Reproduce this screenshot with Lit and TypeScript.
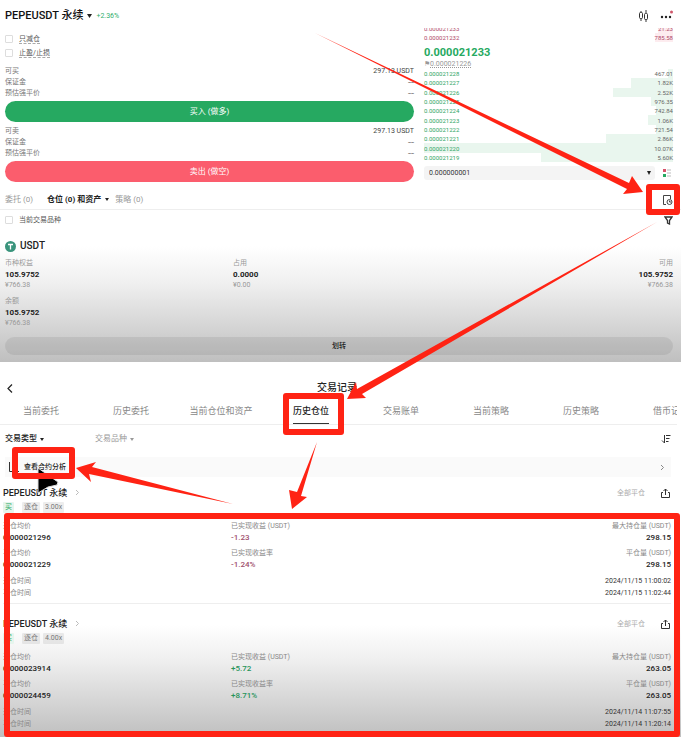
import { LitElement, html, css, svg } from "lit";
import { customElement } from "lit/decorators.js";

interface Level { price: string; size: string; depth: number; }
interface Position {
  side: string; lever: string; open: string; close: string;
  pnl: string; rate: string; size: string; opened: string; closed: string; gain: boolean;
}

const bids: Level[] = [
  { price: "0.000021228", size: "467.01", depth: 2 },
  { price: "0.000021227", size: "1.82K", depth: 17 },
  { price: "0.000021226", size: "2.52K", depth: 24 },
  { price: "0.000021225", size: "976.35", depth: 9 },
  { price: "0.000021224", size: "742.84", depth: 7 },
  { price: "0.000021223", size: "1.06K", depth: 10 },
  { price: "0.000021222", size: "721.54", depth: 7 },
  { price: "0.000021221", size: "2.86K", depth: 27 },
  { price: "0.000021220", size: "10.07K", depth: 100 },
  { price: "0.000021219", size: "5.60K", depth: 53 },
];

const tabs = ["当前委托", "历史委托", "当前仓位和资产", "历史仓位", "交易账单", "当前策略", "历史策略", "借币记录"];

const positions: Position[] = [
  { side: "买", lever: "3.00x", open: "0.000021296", close: "0.000021229", pnl: "-1.23", rate: "-1.24%", size: "298.15", opened: "2024/11/15 11:00:02", closed: "2024/11/15 11:02:44", gain: false },
  { side: "买", lever: "4.00x", open: "0.000023914", close: "0.000024459", pnl: "+5.72", rate: "+8.71%", size: "263.05", opened: "2024/11/14 11:07:55", closed: "2024/11/14 11:20:14", gain: true },
];

const base = css`
  :host { display: block; }
  * { box-sizing: border-box; }
  button, select, input { font: inherit; color: inherit; margin: 0; }
  button { border: 0; padding: 0; background: none; display: flex; align-items: center; }
  svg { display: block; flex: none; }
  h1, h2, h3, p, dl, dd { margin: 0; font-size: inherit; }
`;

@customElement("trade-panel")
export class TradePanel extends LitElement {
  static styles = [base, css`
    .panel { background: linear-gradient(#fff 0, #fff 68%, #f0f0f0 78%, #bfbfbf 100%); padding: 0 8px 7px 5px; }
    .head { display: flex; align-items: center; height: 28px; padding-top: 4px; gap: 4px; }
    h1 { font-size: 11px; font-weight: 500; color: #111; }
    .change { color: #2fae6b; font-size: 7px; flex: 1; }
    .tools { gap: 11px; display: flex; align-items: center; }
    .trade { display: grid; grid-template-columns: 409fr 249fr; column-gap: 10px; }
    .form { padding-top: 4px; }
    .tick { display: flex; align-items: center; gap: 6px; height: 14px; color: #555; }
    .tick input { appearance: none; width: 8px; height: 8px; border: 1px solid #ddd; border-radius: 1px; }
    .tick span { border-bottom: 1px dashed #aaa; line-height: 8px; }
    .tick + .facts { margin-top: 2px; }
    .facts { padding: 4px 0 2px; line-height: 11px; color: #777; }
    .facts div { display: flex; justify-content: space-between; }
    .facts dd { color: #444; }
    .facts .none { font-size: 11px; color: #888; }
    .order { width: 100%; height: 21px; border-radius: 11px; justify-content: center; color: #fff; font-size: 8px; background: #26a961; }
    .sell { background: #fb5d6d; }
    .book { display: flex; flex-direction: column; font-size: 6px; line-height: 9px; color: #666; padding-bottom: 2px; }
    .row { display: flex; justify-content: space-between; align-items: center; }
    .ask { height: 9px; color: #b0486a; }
    .ask span:last-child { background: #fdecef; }
    .cut { height: 5px; overflow: hidden; align-items: flex-end; }
    .last { font-size: 11px; line-height: 12px; font-weight: 700; color: #26a961; padding-top: 5px; }
    .mark { font-size: 7px; line-height: 10px; color: #999; }
    .mark u { text-decoration: underline dotted; }
    .bids { flex: 1; display: flex; flex-direction: column; }
    .bids .row { flex: 1; position: relative; }
    .bids .row span:first-of-type { color: #2fa566; }
    .bids span { position: relative; }
    .depth { position: absolute; right: 0; top: 0; bottom: 0; background: #e9f6ee; }
    .step { display: flex; align-items: center; gap: 6px; margin-top: 4px; font-size: 7px; }
    .pick { flex: 1; display: flex; position: relative; align-items: center; }
    .pick svg { position: absolute; right: 4px; }
    select { appearance: none; width: 100%; height: 14px; border: 0; border-radius: 3px; background: #f4f4f4; padding: 0 5px; color: #333; }
    .views { width: 12px; }
    .tabs { display: flex; align-items: center; gap: 14px; height: 28px; padding: 8px 8px 0 5px; margin: 0 -8px 0 -5px; border-bottom: 1px solid #eee; font-size: 8px; color: #999; }
    .tabs .on { color: #222; font-weight: 700; gap: 4px; margin-right: -8px; }
    .tabs .rec { margin-left: auto; color: #444; }
    .scope { display: flex; justify-content: space-between; align-items: center; height: 20px; }
    .coin { display: flex; align-items: center; gap: 4px; padding-top: 4px; height: 28px; font-size: 10px; color: #222; font-weight: 500; }
    .assets { display: grid; grid-template-columns: 228fr 241fr 199fr; row-gap: 5px; line-height: 11px; color: #999; padding-bottom: 8px; }
    .assets strong { display: block; font-size: 8px; color: #222; }
    .assets .end { text-align: right; }
    .transfer { width: 100%; height: 18px; border-radius: 9px; justify-content: center; color: #222; background: rgba(0, 0, 0, .07); font-weight: 500; }
  `];

  private facts(name: string) {
    return html`<dl class="facts">
      <div><dt>${name}</dt><dd>297.13 USDT</dd></div>
      <div><dt>保证金</dt><dd class="none">--</dd></div>
      <div><dt>预估强平价</dt><dd class="none">--</dd></div>
    </dl>`;
  }

  private asset(name: string, value: string, cny: string, end = false) {
    return html`<div class=${end ? "end" : ""}>${name}<strong>${value}</strong>${cny}</div>`;
  }

  render() {
    return html`<section class="panel">
      <header class="head">
        <h1>PEPEUSDT 永续</h1>
        <svg width="5" height="4"><path d="M0 0h5L2.500 4z" fill="#222"/></svg>
        <span class="change">+2.36%</span>
        <div class="tools">
          <button aria-label="K线">
            <svg width="11" height="12" fill="none" stroke="#333"><rect x="1.500" y="2.500" width="3" height="6" rx="1"/><path d="M3 1v1.500M3 8.500V11M8 0v3M8 9v3"/><rect x="6.500" y="3.500" width="3" height="6" rx="1"/></svg>
          </button>
          <button aria-label="更多">
            <svg width="13" height="12"><g fill="#222"><circle cx="2" cy="7" r="1.200"/><circle cx="6" cy="7" r="1.200"/><circle cx="10" cy="7" r="1.200"/></g><circle cx="11.500" cy="2" r="1.500" fill="#d0566a"/></svg>
          </button>
        </div>
      </header>
      <div class="trade">
        <div class="form">
          <label class="tick"><input type="checkbox"><span>只减仓</span></label>
          <label class="tick"><input type="checkbox"><span>止盈/止损</span></label>
          ${this.facts("可买")}
          <button class="order">买入 (做多)</button>
          ${this.facts("可卖")}
          <button class="order sell">卖出 (做空)</button>
        </div>
        <div class="book">
          <div class="row ask cut"><span>0.000021233</span><span>21.23</span></div>
          <div class="row ask"><span>0.000021232</span><span>785.58</span></div>
          <div class="last">0.000021233</div>
          <div class="mark">⚑<u>0.000021226</u></div>
          <div class="bids">
            ${bids.map((b) => html`<div class="row"><i class="depth" style="width:${b.depth}%"></i><span>${b.price}</span><span>${b.size}</span></div>`)}
          </div>
          <div class="step">
            <label class="pick"><select aria-label="价格精度"><option>0.000000001</option></select>
              <svg width="4" height="4"><path d="M0 0h4L2 4z" fill="#222"/></svg></label>
            <button class="views" aria-label="盘口样式">
              <svg width="12" height="12"><path d="M2 2h3v3H2z" fill="#d9536a"/><path d="M2 7h3v3H2z" fill="#26a961"/><path d="M6 2h4v2H6zM6 5h4v2H6zM6 8h4v2H6z" fill="#ddd"/></svg>
            </button>
          </div>
        </div>
      </div>
      <nav class="tabs">
        <button>委托 (0)</button>
        <button class="on">仓位 (0) 和资产 <svg width="4" height="3"><path d="M0 0h4L2 3z" fill="#222"/></svg></button>
        <button>策略 (0)</button>
        <button class="rec" aria-label="交易记录">
          <svg width="11" height="12" fill="none" stroke="#444"><path d="M4 10.500H1.500v-9h7V5"/><circle cx="7.500" cy="8" r="2.500"/><path d="M7.500 6.500V8H9"/></svg>
        </button>
      </nav>
      <div class="scope">
        <label class="tick"><input type="checkbox">当前交易品种</label>
        <button aria-label="筛选"><svg width="9" height="9" fill="none" stroke="#333" stroke-width="1.300"><path d="M1 1h7L5.500 4.500V8l-2-1V4.500z"/></svg></button>
      </div>
      <h2 class="coin">
        <svg width="11" height="11"><circle cx="5.500" cy="5.500" r="5.500" fill="#3a947c"/><path d="M3 3.500h5M5.500 3.500v5" stroke="#fff" stroke-width="1.300"/></svg>
        USDT
      </h2>
      <div class="assets">
        ${this.asset("币种权益", "105.9752", "¥766.38")}
        ${this.asset("占用", "0.0000", "¥0.00")}
        ${this.asset("可用", "105.9752", "¥766.38", true)}
        ${this.asset("余额", "105.9752", "¥766.38")}
      </div>
      <button class="transfer">划转</button>
    </section>`;
  }
}

@customElement("history-panel")
export class HistoryPanel extends LitElement {
  static styles = [base, css`
    .panel { padding: 16px 10px 7px 3px; background: linear-gradient(#fff 0, #fff 70%, #f0f0f0 79%, #bfbfbf 100%); }
    .head { display: grid; grid-template-columns: 20px 1fr 20px; align-items: center; height: 20px; color: #222; }
    .head button { padding-left: 4px; }
    h2 { text-align: center; font-size: 10px; font-weight: 500; }
    .tabs { display: flex; height: 27px; margin: 0 -6px 0 -7px; overflow: hidden; border-bottom: 1px solid #eee; font-size: 9px; color: #888; }
    .tabs button { flex: 0 0 90px; justify-content: center; white-space: nowrap; }
    .tabs .on { color: #222; font-weight: 500; }
    .tabs span { padding: 7px 0 6px; line-height: 12px; border-bottom: 2px solid transparent; }
    .tabs .on span { border-color: #333; }
    .filters { display: flex; align-items: center; height: 28px; font-size: 8px; color: #999; padding-left: 2px; }
    .filters button { gap: 3px; width: 90px; }
    .filters .on { color: #222; font-weight: 500; }
    .filters .sort { margin-left: auto; width: 10px; }
    .analysis { display: flex; align-items: center; gap: 5px; height: 20px; margin: 4px 0 6px 2px; padding: 0 6px 0 4px; background: #fafafa; color: #222; }
    .analysis a { flex: 1; color: inherit; text-decoration: none; font-weight: 500; }
    .pos { padding-bottom: 4px; border-bottom: 1px solid #eee; }
    .pos + .pos { padding: 10px 0 0; border: 0; }
    .top { display: flex; align-items: center; height: 18px; color: #aaa; padding-right: 1px; padding-top: 1px; }
    h3 { font-size: 9px; font-weight: 500; color: #222; flex: 1; display: flex; gap: 8px; align-items: center; }
    .top button { margin-left: 16px; }
    .tags { display: flex; gap: 3px; line-height: 11px; color: #777; padding-top: 1px; }
    .tags span { background: rgba(0, 0, 0, .07); padding: 0 2px; border-radius: 1px; }
    .tags .side { background: #e6f5ed; color: #26a961; margin-right: 5px; }
    .grid { display: grid; grid-template-columns: 228fr 241fr 199fr; row-gap: 5px; padding-top: 8px; line-height: 11px; color: #888; }
    .grid strong { display: block; font-size: 8px; font-weight: 500; color: #222; }
    .grid .end { text-align: right; }
    .grid .loss { color: #a0506c; }
    .grid .gain { color: #26935a; }
    .times { padding-top: 5px; line-height: 12px; color: #888; }
    .times div { display: flex; justify-content: space-between; }
    .times dd { color: #333; }
  `];

  private cell(name: string, value: string, cls = "", tone = "") {
    return html`<div class=${cls}>${name}<strong class=${tone}>${value}</strong></div>`;
  }

  private chevron(color: string) {
    return svg`<svg width="5" height="7" fill="none" stroke=${color}><path d="M1 1l2.500 2.500L1 6"/></svg>`;
  }

  render() {
    return html`<section class="panel">
      <header class="head">
        <button aria-label="返回"><svg width="6" height="9" fill="none" stroke="#222" stroke-width="1.200"><path d="M5 .5L1 4.500l4 4"/></svg></button>
        <h2>交易记录</h2>
      </header>
      <nav class="tabs">
        ${tabs.map((t) => html`<button class=${t === "历史仓位" ? "on" : ""}><span>${t}</span></button>`)}
      </nav>
      <div class="filters">
        <button class="on">交易类型<svg width="4" height="3"><path d="M0 0h4L2 3z" fill="#222"/></svg></button>
        <button>交易品种<svg width="4" height="3"><path d="M0 0h4L2 3z" fill="#999"/></svg></button>
        <button class="sort" aria-label="排序"><svg width="10" height="10" fill="none" stroke="#333"><path d="M3.500 1v8L1 6.500M5 1.500h4.500M5 4.500h3.500M5 7.500h2.500"/></svg></button>
      </div>
      <div class="analysis">
        <svg width="10" height="10" fill="none" stroke="#333"><path d="M.5 0v9.500H10"/></svg>
        <a href="#analysis">查看合约分析</a>
        ${this.chevron("#888")}
      </div>
      ${positions.map((p) => html`<article class="pos">
        <div class="top"><h3>PEPEUSDT 永续 ${this.chevron("#bbb")}</h3>全部平仓
          <button aria-label="分享"><svg width="9" height="10" fill="none" stroke="#333"><path d="M4.500 7V1M2.500 3l2-2 2 2M2 4.500H.5v5h8v-5H7"/></svg></button>
        </div>
        <div class="tags"><span class="side">${p.side}</span><span>逐仓</span><span>${p.lever}</span></div>
        <div class="grid">
          ${this.cell("开仓均价", p.open)}
          ${this.cell("已实现收益 (USDT)", p.pnl, "", p.gain ? "gain" : "loss")}
          ${this.cell("最大持仓量 (USDT)", p.size, "end")}
          ${this.cell("平仓均价", p.close)}
          ${this.cell("已实现收益率", p.rate, "", p.gain ? "gain" : "loss")}
          ${this.cell("平仓量 (USDT)", p.size, "end")}
        </div>
        <dl class="times">
          <div><dt>开仓时间</dt><dd>${p.opened}</dd></div>
          <div><dt>平仓时间</dt><dd>${p.closed}</dd></div>
        </dl>
      </article>`)}
    </section>`;
  }
}

@customElement("app-root")
export class AppRoot extends LitElement {
  static styles = css`
    :host { display: block; position: relative; overflow: hidden; font: 7px/10px Roboto, "Noto Sans CJK SC", sans-serif; background: #fff; }
    .marks { position: absolute; inset: 0; width: 100%; height: 100%; pointer-events: none; }
    .frame { fill: none; stroke: #ff2314; stroke-width: 6; stroke-linejoin: round; }
    .arrow { fill: #ff2314; }
    .cursor { fill: #000; stroke: #ddd; stroke-width: 1; }
  `;

  render() {
    return html`
      <trade-panel></trade-panel>
      <history-panel></history-panel>
      <svg class="marks" viewBox="0 0 681 737" preserveAspectRatio="none" aria-hidden="true">
        <path class="cursor" d="M38 468l20 14-1 3-9 2-10 6z"/>
        <g class="frame">
          <rect x="649" y="187" width="28" height="25"/>
          <rect x="286" y="396" width="55" height="36"/>
          <rect x="15" y="450" width="57" height="26"/>
          <rect x="7" y="516" width="670" height="218"/>
        </g>
        <g class="arrow">
          <path d="M315 33L629 183l3-7 11 16-20 2 4-5z"/>
          <path d="M657 222L357 389l-1-7-9 17 19-1-4-4z"/>
          <path d="M317 442L297 492l-8-2 3 19 15-12-6-1z"/>
          <path d="M233 504L92 467l4-5-20 6 15 14-2-8z"/>
        </g>
      </svg>`;
  }
}
